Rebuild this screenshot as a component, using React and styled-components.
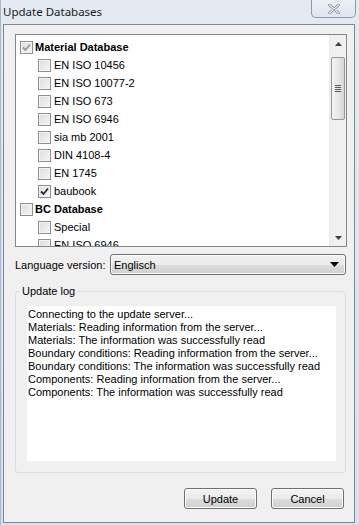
import styled, { createGlobalStyle } from "styled-components";

const GlobalStyle = createGlobalStyle`
  html, body {
    margin: 0;
    padding: 0;
    background: #dae4ef;
  }
  * {
    box-sizing: border-box;
  }
`;

const materials = [
  { label: "EN ISO 10456", checked: false },
  { label: "EN ISO 10077-2", checked: false },
  { label: "EN ISO 673", checked: false },
  { label: "EN ISO 6946", checked: false },
  { label: "sia mb 2001", checked: false },
  { label: "DIN 4108-4", checked: false },
  { label: "EN 1745", checked: false },
  { label: "baubook", checked: true },
];

const bcItems = [
  { label: "Special", checked: false },
  { label: "EN ISO 6946", checked: false },
];

const logLines = [
  "Connecting to the update server...",
  "Materials: Reading information from the server...",
  "Materials: The information was successfully read",
  "Boundary conditions: Reading information from the server...",
  "Boundary conditions: The information was successfully read",
  "Components: Reading information from the server...",
  "Components: The information was successfully read",
];

function CheckBox({ checked, dim }) {
  return (
    <Box>
      {checked && (
        <svg width="9" height="9" viewBox="0 0 9 9">
          <path
            d="M1 4.5 L3.5 7 L8 1.5"
            fill="none"
            stroke={dim ? "#9a9a9a" : "#1e2a44"}
            strokeWidth="1.8"
          />
        </svg>
      )}
    </Box>
  );
}

export default function App() {
  return (
    <>
      <GlobalStyle />
      <Frame>
        <TitleBar>
          <Title>Update Databases</Title>
          <CloseButton>
            <svg width="12" height="10" viewBox="0 0 12 10">
              <path
                d="M1.5 1 L10.5 9 M10.5 1 L1.5 9"
                stroke="#6f7c8c"
                strokeWidth="2.6"
                strokeLinecap="round"
              />
              <path
                d="M1.5 1 L10.5 9 M10.5 1 L1.5 9"
                stroke="#f4f6f9"
                strokeWidth="1.2"
                strokeLinecap="round"
              />
            </svg>
          </CloseButton>
        </TitleBar>
        <Client>
          <ListBox>
            <ListItems>
              <Row $level={0}>
                <CheckBox checked dim />
                <Label $bold>Material Database</Label>
              </Row>
              {materials.map((m) => (
                <Row key={m.label} $level={1}>
                  <CheckBox checked={m.checked} />
                  <Label>{m.label}</Label>
                </Row>
              ))}
              <Row $level={0}>
                <CheckBox />
                <Label $bold>BC Database</Label>
              </Row>
              {bcItems.map((m) => (
                <Row key={m.label} $level={1}>
                  <CheckBox checked={m.checked} />
                  <Label>{m.label}</Label>
                </Row>
              ))}
            </ListItems>
            <ScrollBar>
              <ArrowBtn>
                <svg width="7" height="4" viewBox="0 0 7 4">
                  <path d="M0 4 L3.5 0 L7 4 Z" fill="#404040" />
                </svg>
              </ArrowBtn>
              <Thumb>
                <Grip />
                <Grip />
                <Grip />
                <Grip />
              </Thumb>
              <Track />
              <ArrowBtn>
                <svg width="7" height="4" viewBox="0 0 7 4">
                  <path d="M0 0 L7 0 L3.5 4 Z" fill="#404040" />
                </svg>
              </ArrowBtn>
            </ScrollBar>
          </ListBox>

          <LangRow>
            <LangLabel>Language version:</LangLabel>
            <Combo>
              <span>Englisch</span>
              <svg width="9" height="5" viewBox="0 0 9 5">
                <path d="M0 0 L9 0 L4.5 5 Z" fill="#000" />
              </svg>
            </Combo>
          </LangRow>

          <Group>
            <Legend>Update log</Legend>
            <LogBox>
              {logLines.map((l, i) => (
                <LogLine key={i}>{l}</LogLine>
              ))}
            </LogBox>
          </Group>

          <ButtonBar>
            <Button>Update</Button>
            <Button>Cancel</Button>
          </ButtonBar>
        </Client>
      </Frame>
    </>
  );
}

const Frame = styled.div`
  width: 359px;
  height: 525px;
  display: flex;
  flex-direction: column;
  padding: 0 4px 2px 2px;
  background: linear-gradient(180deg, #e3eaf2 0%, #d6e1ed 100%);
  border-left: 1px solid #a9b8c9;
  font-family: "Liberation Sans", Tahoma, sans-serif;
  font-size: 11px;
  color: #000;
`;

const TitleBar = styled.div`
  height: 24px;
  display: flex;
  align-items: flex-start;
  justify-content: space-between;
  flex-shrink: 0;
`;

const Title = styled.div`
  font-family: "Noto Sans", "Open Sans", sans-serif;
  font-size: 11.5px;
  line-height: 14px;
  padding: 5px 0 0 0;
  color: #1b1b1b;
`;

const CloseButton = styled.div`
  width: 45px;
  height: 18px;
  margin-right: -1px;
  border: 1px solid #8c9aab;
  border-top: none;
  border-radius: 0 0 5px 5px;
  background: linear-gradient(180deg, #edf1f6 0%, #dde5ee 100%);
  display: flex;
  align-items: center;
  justify-content: center;
`;

const Client = styled.div`
  flex: 1;
  background: #f0f0f0;
  border: 1px solid #7d8894;
  display: flex;
  flex-direction: column;
  padding: 9px 7px 0 11px;
`;

const ListBox = styled.div`
  width: 332px;
  height: 213px;
  border: 1px solid #828790;
  background: #fff;
  display: flex;
  overflow: hidden;
`;

const ListItems = styled.div`
  flex: 1;
  padding-top: 3px;
  overflow: hidden;
`;

const Row = styled.div`
  height: 18px;
  display: flex;
  align-items: center;
  padding-left: ${(p) => (p.$level ? 22 : 4)}px;
  gap: ${(p) => (p.$level ? 3 : 2)}px;
`;

const Box = styled.span`
  width: 13px;
  height: 13px;
  border: 1px solid #8e8f8f;
  background: linear-gradient(135deg, #dcdcdc 0%, #f6f6f6 100%);
  box-shadow: inset 0 0 0 1px #f4f4f4;
  display: flex;
  align-items: center;
  justify-content: center;
  flex-shrink: 0;
`;

const Label = styled.span`
  font-weight: ${(p) => (p.$bold ? 700 : 400)};
  white-space: nowrap;
  line-height: 13px;
`;

const ScrollBar = styled.div`
  width: 17px;
  display: flex;
  flex-direction: column;
  background: #f0f0f0;
  border-left: 1px solid #eaeaea;
`;

const ArrowBtn = styled.div`
  height: 17px;
  display: flex;
  align-items: center;
  justify-content: center;
  flex-shrink: 0;
`;

const Thumb = styled.div`
  height: 63px;
  margin: 5px 1px 0 1px;
  border: 1px solid #979797;
  border-radius: 2px;
  background: linear-gradient(90deg, #f3f3f3 0%, #e8e8e8 50%, #d6d6d6 100%);
  display: flex;
  flex-direction: column;
  justify-content: center;
  align-items: center;
  gap: 1px;
`;

const Grip = styled.div`
  width: 6px;
  height: 1px;
  background: #5a5a5a;
`;

const Track = styled.div`
  flex: 1;
`;

const LangRow = styled.div`
  display: flex;
  align-items: center;
  margin-top: 7px;
  height: 21px;
`;

const LangLabel = styled.span`
  width: 95px;
  flex-shrink: 0;
  white-space: nowrap;
`;

const Combo = styled.div`
  width: 236px;
  height: 21px;
  border: 1px solid #707070;
  border-radius: 3px;
  background: linear-gradient(180deg, #f2f2f2 0%, #ebebeb 50%, #dddddd 51%, #cfcfcf 100%);
  display: flex;
  align-items: center;
  justify-content: space-between;
  padding: 0 6px 0 3px;
  box-shadow: inset 0 0 0 1px #fbfbfb;
`;

const Group = styled.fieldset`
  margin: 10px 0 0 0;
  width: 331px;
  height: 188px;
  border: 1px solid #d5dfe5;
  border-radius: 3px;
  padding: 8px 9px 10px 11px;
  min-inline-size: 0;
`;

const Legend = styled.legend`
  padding: 0 2px;
  margin-left: -7px;
  line-height: 13px;
`;

const LogBox = styled.div`
  background: #fff;
  height: 155px;
  padding: 2px 1px;
`;

const LogLine = styled.div`
  line-height: 13px;
  white-space: nowrap;
`;

const ButtonBar = styled.div`
  display: flex;
  justify-content: flex-end;
  gap: 14px;
  margin-top: 15px;
  padding-right: 3px;
`;

const Button = styled.button`
  width: 73px;
  height: 21px;
  border: 1px solid #707070;
  border-radius: 3px;
  background: linear-gradient(180deg, #f2f2f2 0%, #ebebeb 50%, #dddddd 51%, #cfcfcf 100%);
  box-shadow: inset 0 0 0 1px #fcfcfc;
  font-family: "Liberation Sans", Tahoma, sans-serif;
  font-size: 11px;
  color: #000;
  padding: 0;
`;
